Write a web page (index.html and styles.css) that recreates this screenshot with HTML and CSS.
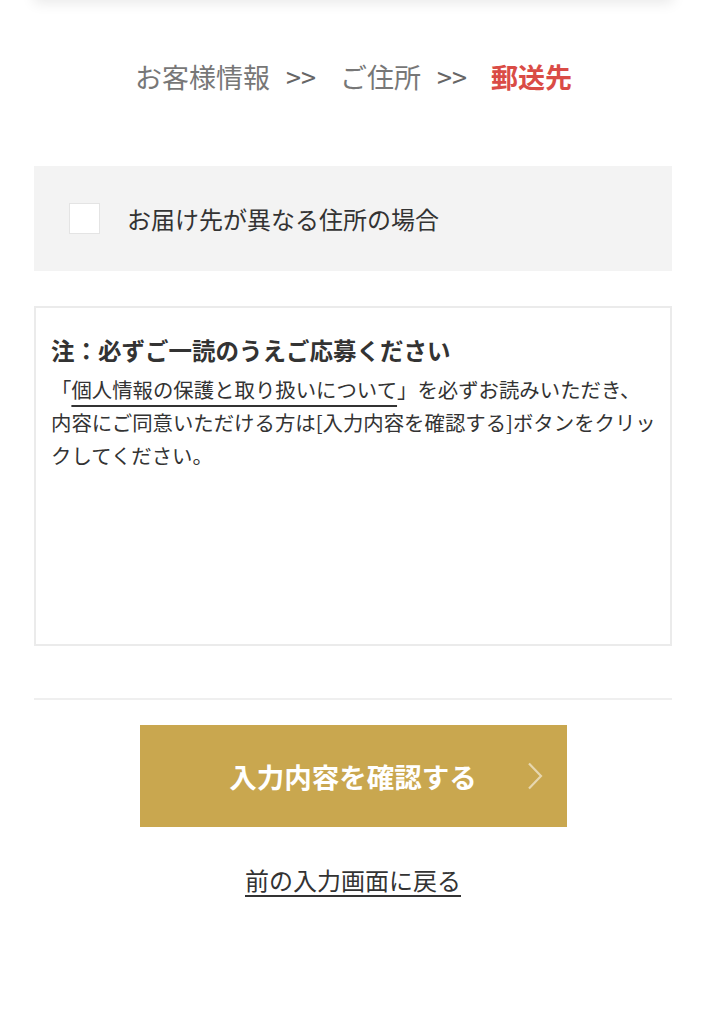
FILE: index.html
```html
<!DOCTYPE html>
<html lang="ja">
<head>
  <meta charset="UTF-8">
  <meta name="viewport" content="width=device-width, initial-scale=1.0">
  <title>郵送先</title>
  <link rel="stylesheet" href="styles.css">
</head>
<body>
  <div class="top-card"></div>

  <div class="steps">
    <span class="step">お客様情報</span>
    <span class="sep">&gt;&gt;</span>
    <span class="step">ご住所</span>
    <span class="sep">&gt;&gt;</span>
    <span class="step current">郵送先</span>
  </div>

  <main class="content">
    <label class="other-address">
      <span class="check"></span>
      <span class="check-label">お届け先が異なる住所の場合</span>
    </label>

    <div class="notice">
      <p class="notice-title">注：必ずご一読のうえご応募ください</p>
      <p class="notice-text">「<a href="#" class="privacy">個人情報の保護と取り扱いについて</a>」を必ずお読みいただき、内容にご同意いただける方は[入力内容を確認する]ボタンをクリックしてください。</p>
    </div>

    <hr class="divider">

    <button type="button" class="confirm">
      入力内容を確認する
      <svg class="chev" width="16" height="28" viewBox="0 0 16 28"><path d="M2 1.5 L14 14 L2 26.5" fill="none" stroke="rgba(255,255,255,0.55)" stroke-width="2.2"/></svg>
    </button>

    <div class="back"><a href="#">前の入力画面に戻る</a></div>
  </main>
</body>
</html>
```

FILE: styles.css
```css
body { margin: 0; background: #fff; color: #333; font-family: "Noto Sans CJK JP", "Noto Sans", sans-serif; }

.top-card { height: 20px; margin: -20px 34px 0; background: #fff; box-shadow: 0 3px 14px rgba(0,0,0,0.09); }

.steps { display: flex; justify-content: center; align-items: center; padding-top: 57px; font-size: 27px; line-height: 39px; color: #777; }
.steps .sep { font-size: 27px; margin: 0 24px 0 16px; color: #666; }
.steps .current { color: #da4c46; font-weight: bold; }

.content { padding: 0 35px 0 34px; }

.other-address { display: flex; align-items: center; height: 105px; margin-top: 70px; padding-left: 35px; background: #f3f3f3; }
.check { width: 29px; height: 29px; background: #fff; border: 1px solid #e4e4e4; }
.check-label { margin-left: 27px; font-size: 24px; color: #333; }

.notice { box-sizing: border-box; height: 340px; margin-top: 35px; padding: 24px 12px 24px 15px; border: 2px solid #ebebeb; }
.notice-title { margin: 0; font-size: 23.5px; line-height: 36px; font-weight: bold; color: #333; }
.notice-text { margin: 5px 0 0; font-size: 20.4px; line-height: 33px; color: #333; }
.notice-text .privacy { color: #333; text-decoration: underline; text-underline-offset: 7px; }

.divider { margin: 52px 0 0; border: 0; height: 2px; background: #efefef; }

.confirm { position: relative; display: block; width: 427px; height: 102px; margin: 25px auto 0; border: 0; background: #c9a74f; color: #fff; font-family: inherit; font-size: 27.5px; font-weight: bold; }
.confirm .chev { position: absolute; right: 24px; top: 37px; }

.back { margin-top: 35px; text-align: center; font-size: 24px; line-height: 36px; }
.back a { color: #333; text-decoration: underline; text-underline-offset: 5px; }
```
